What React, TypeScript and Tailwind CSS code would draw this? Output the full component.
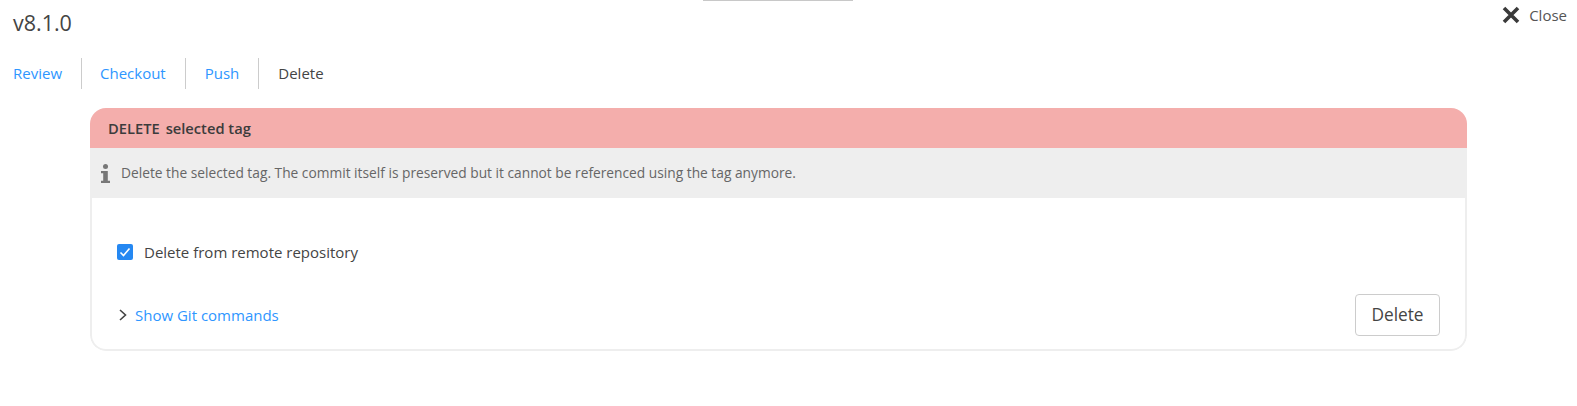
export default function App() {
  return (
    <div className="relative h-[406px] bg-white font-['Open_Sans',sans-serif] text-[#444] overflow-hidden">
      {/* drag handle */}
      <div className="absolute top-0 left-[703px] w-[150px] h-px bg-[#c8c8c8]"></div>

      <button className="absolute top-[5px] right-[10px] flex items-center gap-[9px] text-[15px] leading-[20px] text-[#555]">
        <svg width="18" height="18" viewBox="0 0 18 18" className="text-[#3a3a3a]">
          <path d="M2 2 L16 16 M16 2 L2 16" stroke="currentColor" strokeWidth="3.6" fill="none" />
        </svg>
        Close
      </button>

      <h1 className="pl-[13px] pt-[8px] text-[21.5px] leading-[29px] text-[#444]">v8.1.0</h1>

      <div className="flex items-center h-[31px] mt-[21px] pl-[13px] text-[15px]">
        <a className="text-[#2e96ff] pr-[19px] border-r border-[#ccc] leading-[31px]">Review</a>
        <a className="text-[#2e96ff] pl-[18px] pr-[19px] border-r border-[#ccc] leading-[31px]">Checkout</a>
        <a className="text-[#2e96ff] px-[19px] border-r border-[#ccc] leading-[31px]">Push</a>
        <span className="pl-[19px] leading-[31px]">Delete</span>
      </div>

      <div className="ml-[90px] mt-[19px] w-[1377px] h-[243px] rounded-[16px] overflow-hidden flex flex-col">
        <div className="h-[40px] flex items-center px-[18px] bg-[#f4aeac] text-[14.7px] font-semibold text-[#3c3c3c] shrink-0">
          <span>DELETE</span>
          <span className="ml-[6px]">selected tag</span>
        </div>
        <div className="h-[50px] flex items-center pl-[11px] bg-[#eee] text-[13.75px] text-[#666] shrink-0">
          <svg width="9" height="19" viewBox="0 0 9 19" className="text-[#777] mr-[11px] shrink-0">
            <circle cx="4.5" cy="2.5" r="2.5" fill="currentColor" />
            <path d="M0 7 H6.8 V16.8 H9 V19 H0 V16.8 H2.2 V9.2 H0 Z" fill="currentColor" />
          </svg>
          Delete the selected tag. The commit itself is preserved but it cannot be referenced using the tag anymore.
        </div>
        <div className="flex-1 flex flex-col px-[25px] border-2 border-t-0 border-[#eee] rounded-b-[16px]">
          <label className="flex items-center mt-[44px] text-[15px] leading-[20px]">
            <span className="w-4 h-4 rounded-[2px] bg-[#2588f2] flex items-center justify-center mr-[11px]">
              <svg width="12" height="12" viewBox="0 0 12 12">
                <path d="M1.5 6.5 L4.5 9.5 L10.5 2.5" stroke="white" strokeWidth="1.6" fill="none" />
              </svg>
            </span>
            Delete from remote repository
          </label>
          <div className="flex items-center justify-between mt-[32px]">
            <a className="flex items-center text-[15px] text-[#2e96ff]">
              <svg width="8" height="12" viewBox="0 0 8 12" className="text-[#444] ml-[2px] mr-[8px]">
                <path d="M1 1 L6.5 6 L1 11" stroke="currentColor" strokeWidth="1.6" fill="none" />
              </svg>
              Show Git commands
            </a>
            <button className="w-[85px] h-[42px] rounded-[4px] border border-[#ccc] text-[17.25px] text-[#444] bg-white">Delete</button>
          </div>
        </div>
      </div>
    </div>
  );
}
